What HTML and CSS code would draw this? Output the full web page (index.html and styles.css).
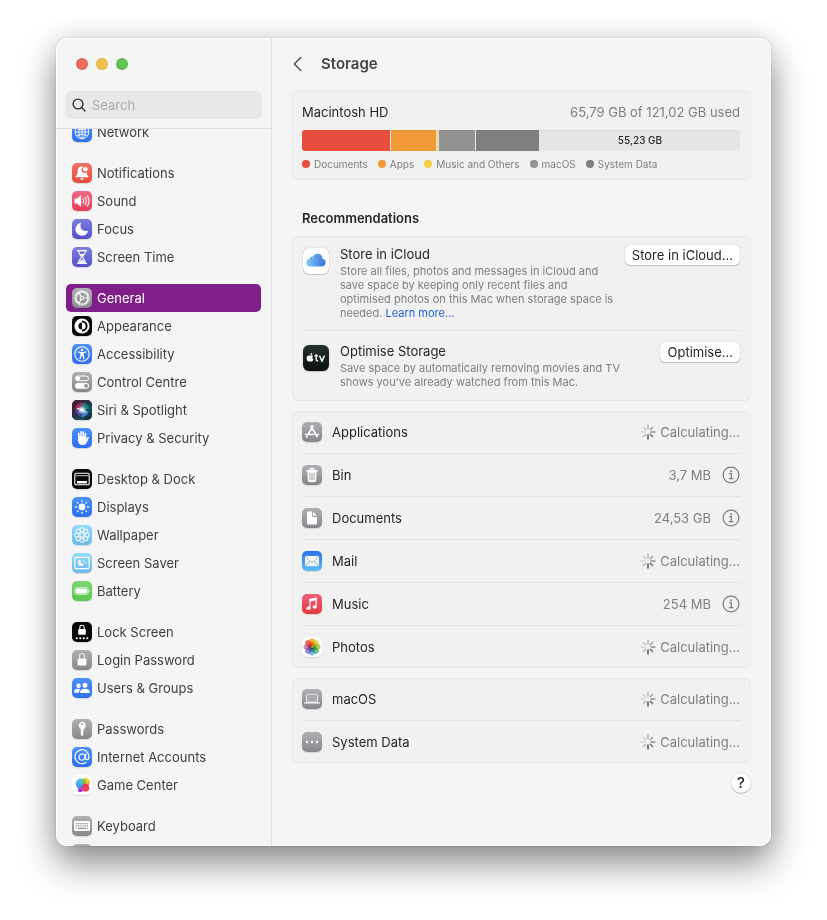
FILE: index.html
```html
<!DOCTYPE html>
<html lang="en-GB">
<head>
<meta charset="utf-8">
<meta name="viewport" content="width=device-width, initial-scale=1">
<title>Storage</title>
<link rel="stylesheet" href="styles.css">
</head>
<body>
<svg class="defs" aria-hidden="true">
  <symbol id="spinner" viewBox="0 0 16 16">
    <g stroke-width="1.700" stroke-linecap="round">
      <path d="M8 4.800V1.200" stroke="#bdbdbd"/>
      <path d="M10.400 5.600l2.100-2.100" stroke="#a8a8a8"/>
      <path d="M11.200 8h3.600" stroke="#8a8a8a"/>
      <path d="M10.400 10.400l2.100 2.100" stroke="#7a7a7a"/>
      <path d="M8 11.200v3.600" stroke="#666"/>
      <path d="M5.600 10.400l-2.100 2.100" stroke="#bdbdbd"/>
      <path d="M4.800 8H1.200" stroke="#d4d4d4"/>
      <path d="M5.600 5.600L3.500 3.500" stroke="#cfcfcf"/>
    </g>
  </symbol>
  <symbol id="info" viewBox="0 0 18 18">
    <g fill="none" stroke="#7b7b7b" stroke-width="1.200">
      <circle cx="9" cy="9" r="7.900"/>
      <path d="M7.300 7.600h2v5M6.900 12.700h4.500"/>
    </g>
    <circle cx="9" cy="5.200" r="1" fill="#7b7b7b"/>
  </symbol>
  <symbol id="lock" viewBox="0 0 20 20">
    <rect x="5.600" y="8.600" width="8.800" height="6.800" rx="1" fill="#fff"/>
    <path d="M7.500 9V6.400a2.500 2.900 0 0 1 5 0V9" fill="none" stroke="#e8e8ea" stroke-width="1.200"/>
  </symbol>
</svg>

<div class="window">
  <aside class="sidebar">
    <div class="lights">
      <button class="light close" aria-label="Close"></button>
      <button class="light minimise" aria-label="Minimise"></button>
      <button class="light expand" aria-label="Zoom"></button>
    </div>
    <label class="search">
      <svg viewBox="0 0 14 14" width="14" height="14" aria-hidden="true"><g fill="none" stroke="#333" stroke-width="1.400" stroke-linecap="round"><circle cx="6" cy="6" r="4.900"/><path d="M9.600 9.600l3.400 3.400"/></g></svg>
      <input type="search" placeholder="Search" aria-label="Search">
    </label>
    <nav class="nav" aria-label="Settings">
      <ul class="group">
        <li><a class="item" href="#"><svg class="icon blue" viewBox="0 0 20 20"><g fill="none" stroke="#fff" stroke-width=".9"><circle cx="10" cy="10" r="6.800"/><ellipse cx="10" cy="10" rx="3.200" ry="6.800"/><path d="M3.200 10h13.600M10 3.200v13.600M4.300 6.400q5.700 2.800 11.400 0M4.300 13.600q5.700-2.800 11.400 0"/></g></svg>Network</a></li>
      </ul>
      <ul class="group">
        <li><a class="item" href="#"><svg class="icon red" viewBox="0 0 20 20"><path fill="#fff" d="M9.800 3.300c-2.700.2-4 2-4.100 4.600-.1 2.800-.5 4-2 5.300-.5.600-.2 1.100.4 1.100h11.800c.6 0 .9-.5.4-1.100-1.200-1.100-1.700-2-1.900-3.900a2.900 2.900 0 0 1-3.700-4.700c.2-.5-.2-1.300-.9-1.300zM8 15.200h4q-.4 1.500-2 1.500t-2-1.500z"/><circle cx="13.400" cy="6.200" r="2.300" fill="#fff"/></svg>Notifications</a></li>
        <li><a class="item" href="#"><svg class="icon pink" viewBox="0 0 20 20"><path fill="#fff" d="M2.500 8q0-.6.600-.6h2L8.200 4.800q.9-.6.900.4v9.600q0 1-.9.400l-3.100-2.600h-2q-.6 0-.6-.6z"/><g fill="none" stroke="#fff" stroke-width="1.100" stroke-linecap="round"><path d="M11 7.800q1.300 2.200 0 4.400M13.100 6.300q2.400 3.700 0 7.400M15.300 4.900q3.500 5.100 0 10.200"/></g></svg>Sound</a></li>
        <li><a class="item" href="#"><svg class="icon indigo" viewBox="0 0 20 20"><path fill="#fff" d="M8.300 4.100c.5-.2.900.1.600.7-1.700 4.200 1.700 8.200 6.300 6.900.6-.1 1 .3.700.8A6.400 6.400 0 1 1 8.300 4.100z"/></svg>Focus</a></li>
        <li><a class="item" href="#"><svg class="icon indigo" viewBox="0 0 20 20"><path fill="none" stroke="#fff" stroke-width="1.300" stroke-linecap="round" d="M5.500 3.700h9M5.500 16.300h9"/><path fill="none" stroke="#fff" stroke-width="1.100" d="M6.600 4c0 3.500 2.700 4 2.700 6s-2.700 2.500-2.700 6M13.400 4c0 3.500-2.700 4-2.700 6s2.700 2.500 2.700 6"/><path fill="#fff" d="M7.400 7h5.200L10 10zM7 16q.5-2.500 3-3.500 2.500 1 3 3.500z"/></svg>Screen Time</a></li>
      </ul>
      <ul class="group">
        <li><a class="item selected" href="#" aria-current="page"><svg class="icon gray" viewBox="0 0 20 20"><g fill="none" stroke="#fff"><circle cx="10" cy="10" r="7.300" stroke-width="1.200" stroke-dasharray="1.100 .81"/><circle cx="10" cy="10" r="6.100" stroke-width="1.200"/><circle cx="10" cy="10" r="1.600" stroke-width="1"/><path stroke-width="1.100" d="M11.600 10h4.400M9.200 8.600L7 4.900M9.200 11.400L7 15.100"/></g></svg>General</a></li>
        <li><a class="item" href="#"><svg class="icon black" viewBox="0 0 20 20"><circle cx="10" cy="10" r="7.600" fill="#fff"/><path d="M10 4.400a5.600 5.600 0 0 1 0 11.200z" fill="#111"/><path d="M10 6.400a3.600 3.600 0 0 0 0 7.200z" fill="#111"/><path d="M10 6.400a3.600 3.600 0 0 1 0 7.200z" fill="#fff"/></svg>Appearance</a></li>
        <li><a class="item" href="#"><svg class="icon blue" viewBox="0 0 20 20"><circle cx="10" cy="10" r="7.200" fill="none" stroke="#fff" stroke-width="1.100"/><circle cx="10" cy="5.900" r="1.200" fill="#fff"/><path fill="none" stroke="#fff" stroke-width="1.200" stroke-linecap="round" stroke-linejoin="round" d="M6.200 8l2.800.6h2l2.800-.6M9.100 8.700v2.600L8 14.700M10.900 8.700v2.600l1.100 3.400"/><path fill="#fff" d="M8.800 8.500h2.400v3.200H8.800z"/></svg>Accessibility</a></li>
        <li><a class="item" href="#"><svg class="icon gray" viewBox="0 0 20 20"><rect x="3.500" y="4" width="13" height="4.800" rx="2.400" fill="none" stroke="#fff"/><circle cx="6" cy="6.400" r="2.100" fill="#fff"/><rect x="3" y="10.900" width="14" height="5.800" rx="2.900" fill="#fff"/><circle cx="14.100" cy="13.800" r="1.900" fill="#929297"/></svg>Control Centre</a></li>
        <li><a class="item" href="#"><svg class="icon black" viewBox="0 0 20 20"><defs><radialGradient id="siriCore"><stop offset="0" stop-color="#fff"/><stop offset=".3" stop-color="#cdeaff"/><stop offset="1" stop-color="#6ab8e8" stop-opacity="0"/></radialGradient><linearGradient id="siriBase" x1="0" y1="0" x2="1" y2="1"><stop offset="0" stop-color="#5a1030"/><stop offset=".45" stop-color="#23344a"/><stop offset=".7" stop-color="#145058"/><stop offset="1" stop-color="#10182a"/></linearGradient></defs><rect width="20" height="20" rx="5" fill="url(#siriBase)"/><circle cx="10" cy="10" r="7.600" fill="#222a48"/><path d="M3 9q1-6 8-6.500Q9 6 10 10z" fill="#b32a55"/><path d="M11 2.500q6 1.500 6.500 7L10 10q-1-4 1-7.500z" fill="#1a7f78"/><path d="M17 11q-1.500 6-8 6.300Q11 14 10 10z" fill="#3e81bf"/><path d="M9 17.300Q3.500 15 3 9l7 1z" fill="#5b3f8c"/><circle cx="10" cy="10" r="5" fill="url(#siriCore)"/><path d="M5 8.500q6 .5 9.500 4" stroke="#fff" stroke-width="1" fill="none"/></svg>Siri &amp; Spotlight</a></li>
        <li><a class="item" href="#"><svg class="icon blue" viewBox="0 0 20 20"><g stroke="#fff" stroke-width="1.600" stroke-linecap="round"><path d="M6.800 11V5.400M9 10V3.800M11.200 10V4M13.400 11V5.600"/></g><path fill="#fff" d="M6 8.500h8.200v2.600l1-1.600q.5-.8 1.200-.4.600.4.300 1.100l-1.800 4.100c-.8 1.800-2.100 2.700-4.200 2.700-3.100 0-4.700-1.900-4.700-4.800z"/></svg>Privacy &amp; Security</a></li>
      </ul>
      <ul class="group">
        <li><a class="item" href="#"><svg class="icon black" viewBox="0 0 20 20"><rect x="2.800" y="4.300" width="14.400" height="11.400" rx="1.300" fill="none" stroke="#fff" stroke-width="1.100"/><path d="M3.500 6.700h13" stroke="#ddd" stroke-width=".9"/><rect x="5" y="12" width="10" height="2.400" rx=".5" fill="#fff"/></svg>Desktop &amp; Dock</a></li>
        <li><a class="item" href="#"><svg class="icon blue" viewBox="0 0 20 20"><circle cx="10" cy="10" r="3.400" fill="#fff"/><path stroke="#fff" stroke-width="1.300" stroke-linecap="round" d="M10 3.600v.9M10 15.500v.9M3.600 10h.9M15.500 10h.9M5.500 5.500l.6.600M13.900 13.900l.6.600M5.500 14.500l.6-.6M13.900 6.100l.6-.6"/></svg>Displays</a></li>
        <li><a class="item" href="#"><svg class="icon sky" viewBox="0 0 20 20"><g fill="none" stroke="#fff" stroke-width="1"><circle cx="10" cy="4.800" r="2.200"/><circle cx="13.700" cy="6.300" r="2.200"/><circle cx="15.200" cy="10" r="2.200"/><circle cx="13.700" cy="13.700" r="2.200"/><circle cx="10" cy="15.200" r="2.200"/><circle cx="6.300" cy="13.700" r="2.200"/><circle cx="4.800" cy="10" r="2.200"/><circle cx="6.300" cy="6.300" r="2.200"/><circle cx="10" cy="10" r="2.200"/></g></svg>Wallpaper</a></li>
        <li><a class="item" href="#"><svg class="icon sky" viewBox="0 0 20 20"><rect x="2.900" y="4.400" width="14.200" height="11.200" rx=".8" fill="none" stroke="#fff" stroke-width="1.100"/><path fill="#fff" d="M8.400 7.200q-.4 3.100 3.100 3.600.5 0 .3.400A3.100 3.100 0 1 1 7.900 7q.5-.2.500.2z"/><circle cx="11.300" cy="8" r=".7" fill="#fff"/><circle cx="13.700" cy="9.800" r=".8" fill="#fff"/></svg>Screen Saver</a></li>
        <li><a class="item" href="#"><svg class="icon green" viewBox="0 0 20 20"><rect x="2.700" y="6.600" width="13.600" height="6.800" rx="1.900" fill="none" stroke="#d2f3cf" stroke-width=".9"/><rect x="3.700" y="7.500" width="11.600" height="5" rx="1.200" fill="#fff"/><path d="M17.200 8.800q1.300 1.200 0 2.400z" fill="#fff"/></svg>Battery</a></li>
      </ul>
      <ul class="group">
        <li><a class="item" href="#"><svg class="icon black" viewBox="0 0 20 20"><rect x="6.200" y="7" width="7.600" height="5.800" rx=".9" fill="#fff"/><path d="M7.800 7.500V5.700a2.200 2.400 0 0 1 4.400 0v1.800" fill="none" stroke="#fff" stroke-width="1.100"/><path d="M4.700 16.200h.1M8.200 16.200h.1M11.700 16.200h.1M15.200 16.200h.1" stroke="#fff" stroke-width="2" stroke-linecap="round"/></svg>Lock Screen</a></li>
        <li><a class="item" href="#"><svg class="icon gray" viewBox="0 0 20 20"><use href="#lock"/></svg>Login Password</a></li>
        <li><a class="item" href="#"><svg class="icon blue" viewBox="0 0 20 20"><g fill="#fff"><circle cx="6.600" cy="7.700" r="2.200"/><circle cx="13" cy="7.300" r="2.500"/><path d="M2 14q.2-3.200 4.300-3.200 1 0 2 .4Q7 12.400 7 14.800H2.800Q2 14.800 2 14zM8 14.200q.3-3.500 5-3.500t5 3.500q0 .8-.8.800H8.800q-.8 0-.8-.8z"/></g></svg>Users &amp; Groups</a></li>
      </ul>
      <ul class="group">
        <li><a class="item" href="#"><svg class="icon gray" viewBox="0 0 20 20"><path fill="#fff" fill-rule="evenodd" d="M10 2.800a3.900 3.900 0 0 1 1.700 7.300v1.100l-.9.900 1.100 1-1.100 1.100.9 1-1.700 2-1.200-1.200v-5.900A3.900 3.900 0 0 1 10 2.800zM10 4a1.100 1.100 0 1 0 0 2.200A1.100 1.100 0 0 0 10 4z"/></svg>Passwords</a></li>
        <li><a class="item" href="#"><svg class="icon blue" viewBox="0 0 20 20"><g fill="none" stroke="#fff" stroke-width="1.200" stroke-linecap="round"><path d="M14.200 15.300A7 7 0 1 1 17 9.700c0 3.900-3.900 3.700-3.500.7l.5-3.500"/><ellipse cx="10" cy="10" rx="2.900" ry="3.200" transform="rotate(20 10 10)"/></g></svg>Internet Accounts</a></li>
        <li><a class="item" href="#"><svg class="icon white" viewBox="0 0 20 20"><defs><linearGradient id="gcBlue" x1="0" y1="0" x2="0" y2="1"><stop offset="0" stop-color="#55cdf4"/><stop offset="1" stop-color="#3b8cf0"/></linearGradient><linearGradient id="gcYellow" x1="0" y1="0" x2="0" y2="1"><stop offset="0" stop-color="#fbe23d"/><stop offset="1" stop-color="#f39422"/></linearGradient></defs><circle cx="8.200" cy="15" r="2.300" fill="#a12bf0"/><circle cx="13.700" cy="7" r="4.300" fill="url(#gcYellow)"/><circle cx="8.700" cy="8.600" r="5" fill="url(#gcBlue)"/><path d="M9.600 8.400a4.300 4.300 0 0 1 2-5 5 5 0 0 1 1.900 6.200q-1.600.9-3.900-1.200z" fill="#6cc04e"/><circle cx="13.400" cy="12.700" r="3.900" fill="#f7395f"/><path d="M9.700 11.600a3.900 3.900 0 0 1 3.500-2.700q-.9 3.600-3.700 4.500z" fill="#a2507e"/></svg>Game Center</a></li>
      </ul>
      <ul class="group">
        <li><a class="item" href="#"><svg class="icon gray" viewBox="0 0 20 20"><rect x="2" y="5" width="16" height="10" rx="1.400" fill="#fff"/><path d="M3.800 7.600h12.400M3.800 9.900h12.400" stroke="#8f8f94" stroke-width="1.200" stroke-dasharray="1.200 .65"/><path d="M3.800 12.400h1.200M6 12.400h8M15 12.400h1.200" stroke="#8f8f94" stroke-width="1.200"/></svg>Keyboard</a></li>
        <li><a class="item" href="#" aria-label="Mouse"><svg class="icon gray" viewBox="0 0 20 20"><rect x="6.500" y="4" width="7" height="12" rx="3.500" fill="#fff"/></svg></a></li>
      </ul>
    </nav>
  </aside>

  <main class="content">
    <header class="titlebar">
      <button class="back" aria-label="Back"><svg viewBox="0 0 10 16" width="10" height="16"><path d="M8.800 1.500L2.300 8l6.500 6.500" fill="none" stroke="#555" stroke-width="1.500" stroke-linecap="round" stroke-linejoin="round"/></svg></button>
      <h1>Storage</h1>
    </header>

    <section class="card disk">
      <div class="disk-head"><h2>Macintosh HD</h2><span>65,79 GB of 121,02 GB used</span></div>
      <div class="bar">
        <span class="seg documents" style="flex-grow:88"></span>
        <span class="seg apps" style="flex-grow:45"></span>
        <span class="seg music" style="flex-grow:1"></span>
        <span class="seg macos" style="flex-grow:36"></span>
        <span class="seg system" style="flex-grow:63"></span>
        <span class="seg free" style="flex-grow:200">55,23 GB</span>
      </div>
      <ul class="legend">
        <li><i class="documents"></i>Documents</li>
        <li><i class="apps"></i>Apps</li>
        <li><i class="music"></i>Music and Others</li>
        <li><i class="macos"></i>macOS</li>
        <li><i class="system"></i>System Data</li>
      </ul>
    </section>

    <h2 class="section-title">Recommendations</h2>
    <section class="card">
      <article class="tip">
        <svg class="app-icon white" viewBox="0 0 26 26"><defs><linearGradient id="cloud"><stop offset="0" stop-color="#7fcdf3"/><stop offset="1" stop-color="#3a71e0"/></linearGradient></defs><path fill="url(#cloud)" d="M7 18.600a3.900 3.900 0 0 1-.8-7.700 3.200 3.200 0 0 1 3.700-2.400 5 5 0 0 1 9.500 2.200 4 4 0 0 1-.5 7.900z"/></svg>
        <div class="tip-text">
          <h3>Store in iCloud</h3>
          <p>Store all files, photos and messages in iCloud and save space by keeping only recent files and optimised photos on this Mac when storage space is needed. <a href="#">Learn more…</a></p>
        </div>
        <button class="push">Store in iCloud…</button>
      </article>
      <article class="tip">
        <svg class="app-icon tv" viewBox="0 0 26 26"><path fill="#fff" d="M7.500 10.700c.8-.5 1.900-.5 2.700.2-1.300.9-1.100 2.800.3 3.400-.4 1.200-1.100 2.300-1.900 2.300-.6 0-.8-.3-1.400-.3s-.9.300-1.400.3C4.700 16.600 3.600 14.800 3.600 13c0-2.100 1.700-3.100 3-2.400zM7.400 10.100c-.1-1.200.8-2.200 1.900-2.400.1 1.300-.8 2.300-1.900 2.400z"/><path fill="none" stroke="#fff" stroke-width="1.400" d="M13.200 8.900v5.700q0 1.500 2 1.200M11.500 10.900h3.700M16.500 10.600l2.500 5.500 2.500-5.500"/></svg>
        <div class="tip-text">
          <h3>Optimise Storage</h3>
          <p>Save space by automatically removing movies and TV shows you’ve already watched from this Mac.</p>
        </div>
        <button class="push">Optimise…</button>
      </article>
    </section>

    <ul class="card rows">
      <li><svg class="icon gray" viewBox="0 0 20 20"><path fill="none" stroke="#fff" stroke-width="1.600" stroke-linecap="round" d="M9 4l5.900 10.600M11 4L6 12.500M3.500 12.500h8M14 12.500h2.500M5 14.300l-.4.700"/></svg><span class="name">Applications</span><span class="value"><svg class="spin"><use href="#spinner"/></svg>Calculating…</span></li>
      <li><svg class="icon gray" viewBox="0 0 20 20"><path fill="none" stroke="#fff" stroke-width="1.200" stroke-linecap="round" stroke-linejoin="round" d="M4.400 5.700h11.200M8 5.500V3.700h4v1.800"/><path fill="#fff" d="M5.300 6h9.400l-.6 9.700q-.1 1.200-1.200 1.200H7.100q-1.100 0-1.200-1.200z"/><path stroke="#98989c" stroke-width=".9" d="M7.800 7.800l.3 7.200M10 7.800V15M12.200 7.800l-.3 7.200"/></svg><span class="name">Bin</span><span class="value">3,7 MB<button class="info" aria-label="Info for Bin"><svg><use href="#info"/></svg></button></span></li>
      <li><svg class="icon gray" viewBox="0 0 20 20"><path fill="#fff" d="M6.300 3.500h3.800v4.300q0 1.100 1.100 1.100H15v6.300q0 1.300-1.300 1.300H6.300Q5 16.500 5 15.200V4.800q0-1.300 1.300-1.300z"/><path fill="#fff" d="M11.100 3.700L14.800 7.700h-3q-.7 0-.7-.7z"/></svg><span class="name">Documents</span><span class="value">24,53 GB<button class="info" aria-label="Info for Documents"><svg><use href="#info"/></svg></button></span></li>
      <li><svg class="icon mail" viewBox="0 0 20 20"><rect x="3" y="5" width="14" height="10.300" rx="1.200" fill="#f2f4f6"/><path d="M3.500 5.700l5.600 5.300q.9.700 1.800 0l5.600-5.300M3.500 14.700l4.300-4.400M16.500 14.700l-4.300-4.400" stroke="#a0a7b2" stroke-width=".8" fill="none"/></svg><span class="name">Mail</span><span class="value"><svg class="spin"><use href="#spinner"/></svg>Calculating…</span></li>
      <li><svg class="icon music-app" viewBox="0 0 20 20"><path fill="none" stroke="#fff" stroke-width="1.200" d="M8 13.800V5.600l6.100-1.300v8.200"/><path fill="#fff" d="M7.500 5.200l7.200-1.600v2.500L7.500 7.700z"/><ellipse cx="6.500" cy="14.200" rx="2.100" ry="1.700" fill="#fff"/><ellipse cx="12.700" cy="12.900" rx="2.100" ry="1.700" fill="#fff"/></svg><span class="name">Music</span><span class="value">254 MB<button class="info" aria-label="Info for Music"><svg><use href="#info"/></svg></button></span></li>
      <li><svg class="icon white" viewBox="0 0 20 20"><g class="petals"><rect x="7.300" y="1.500" width="5.400" height="8" rx="2.700" fill="#f6a42c"/><rect x="7.300" y="1.500" width="5.400" height="8" rx="2.700" fill="#e3d839" transform="rotate(45 10 10)"/><rect x="7.300" y="1.500" width="5.400" height="8" rx="2.700" fill="#a6ce56" transform="rotate(90 10 10)"/><rect x="7.300" y="1.500" width="5.400" height="8" rx="2.700" fill="#63bb88" transform="rotate(135 10 10)"/><rect x="7.300" y="1.500" width="5.400" height="8" rx="2.700" fill="#6caee2" transform="rotate(180 10 10)"/><rect x="7.300" y="1.500" width="5.400" height="8" rx="2.700" fill="#9084cc" transform="rotate(225 10 10)"/><rect x="7.300" y="1.500" width="5.400" height="8" rx="2.700" fill="#cc87b6" transform="rotate(270 10 10)"/><rect x="7.300" y="1.500" width="5.400" height="8" rx="2.700" fill="#ef5d4a" transform="rotate(315 10 10)"/></g></svg><span class="name">Photos</span><span class="value"><svg class="spin"><use href="#spinner"/></svg>Calculating…</span></li>
    </ul>

    <ul class="card rows">
      <li><svg class="icon gray" viewBox="0 0 20 20"><rect x="4.500" y="5.400" width="11" height="7.700" rx=".6" fill="#aaaaae" stroke="#e6e6e8"/><path d="M2.300 13.900h15.400" stroke="#fff" stroke-width="1.200"/></svg><span class="name">macOS</span><span class="value"><svg class="spin"><use href="#spinner"/></svg>Calculating…</span></li>
      <li><svg class="icon gray" viewBox="0 0 20 20"><g fill="#fff"><circle cx="5" cy="10" r="1.200"/><circle cx="10" cy="10" r="1.200"/><circle cx="15" cy="10" r="1.200"/></g></svg><span class="name">System Data</span><span class="value"><svg class="spin"><use href="#spinner"/></svg>Calculating…</span></li>
    </ul>
    <button class="help" aria-label="Help">?</button>
  </main>
</div>
</body>
</html>
```
FILE: styles.css
```css
* { box-sizing: border-box; }
body {
  margin: 0;
  height: 100vh;
  padding: 38px 56px 74px;
  display: flex;
  background: #fff;
  font: 13px/16px Inter, "Liberation Sans", sans-serif;
  color: #262626;
}
h1, h2, h3, p, ul { margin: 0; padding: 0; font-size: inherit; font-weight: 400; }
ul { list-style: none; }
button { font: inherit; color: inherit; border: 0; padding: 0; background: none; }
a { color: inherit; text-decoration: none; }
.defs { position: absolute; width: 0; height: 0; }

.window {
  flex: 1;
  display: flex;
  min-width: 0;
  overflow: hidden;
  border-radius: 11px;
  background: #f5f5f5;
  box-shadow: 0 0 1px rgba(0,0,0,.5), inset 0 0 0 1px #fff, 0 18px 36px rgba(0,0,0,.44), 0 0 24px rgba(0,0,0,.1);
}

.sidebar {
  flex: 0 0 216px;
  min-width: 0;
  display: flex;
  flex-direction: column;
  border-right: 1px solid #e0e0e0;
}
.lights { display: flex; gap: 8px; padding: 20px 20px 21px; }
.light { width: 12px; height: 12px; border-radius: 50%; box-shadow: inset 0 0 0 1px rgba(0,0,0,.06); }
.close { background: #ed6a5f; }
.minimise { background: #f5bf4f; }
.expand { background: #61c554; }
.search {
  display: flex;
  align-items: center;
  gap: 6px;
  height: 28px;
  margin: 0 9px 9px;
  padding: 0 7px;
  border-radius: 6px;
  background: #e8e8e8;
}
.search svg { flex: none; }
.search input {
  flex: 1;
  width: 100%;
  min-width: 0;
  border: 0;
  padding: 0;
  outline: 0;
  background: none;
  font: inherit;
  appearance: none;
}
.search input::placeholder { color: #ababab; }
.nav { flex: 1; min-height: 0; overflow: hidden; border-top: 1px solid #dcdcdc; padding: 0 10px; }
.group { margin-bottom: 13px; }
.group:first-child { margin-top: -11px; }
.item {
  display: flex;
  align-items: center;
  gap: 5px;
  height: 28px;
  padding: 0 6px;
  border-radius: 5px;
  color: #3f3f3f;
}
.selected { background: #811f8a; color: #fff; }

.icon { flex: none; width: 20px; height: 20px; border-radius: 5px; box-shadow: 0 1px 1px rgba(0,0,0,.12); }
.blue { background: linear-gradient(#4c92f8, #2d6ff0); }
.red { background: linear-gradient(#ef7569, #e9493a); }
.pink { background: linear-gradient(#ef6a86, #ea3d5b); }
.indigo { background: linear-gradient(#7f7ce0, #5350cb); }
.gray { background: linear-gradient(#b0b0b4, #88888c); }
.black { background: #080808; }
.sky { background: linear-gradient(#92dcf8, #6db9e8); }
.green { background: linear-gradient(#7bd974, #5bc552); }
.white { background: #fff; }
.mail { background: linear-gradient(#2f6ce8, #59c3f8); }
.music-app { background: linear-gradient(#ee6277, #e6373f); }
.petals rect { mix-blend-mode: multiply; opacity: .92; }

.content { flex: 1; min-width: 0; padding: 0 20px; }
.titlebar { display: flex; align-items: center; gap: 19px; height: 52px; }
.titlebar h1 { font-size: 15px; line-height: 20px; font-weight: 600; color: #444; }
.back { display: flex; }
.card {
  border-radius: 6px;
  background: #f1f1f1;
  box-shadow: inset 0 0 0 1px #e8e8e8;
}
.disk { padding: 14px 11px 8px 10px; }
.disk-head { display: flex; justify-content: space-between; margin-bottom: 10px; }
.disk-head span { color: #7f7f7f; }
.bar {
  display: flex;
  gap: 1px;
  height: 21px;
  overflow: hidden;
  border-radius: 3px;
  background: #e6e6e6;
}
.seg { flex: 0 0 0; min-width: 1px; }
.seg, .legend i { box-shadow: inset 0 1px 0 rgba(0,0,0,.05); }
.documents { background: #e94d3d; }
.apps { background: #f19b38; }
.music { background: #f8ce46; }
.macos { background: #929292; }
.system { background: #7f7f7f; }
.free { font-size: 10px; line-height: 21px; font-weight: 500; text-align: center; white-space: nowrap; }
.legend {
  display: flex;
  gap: 10px;
  padding-top: 5px;
  font-size: 10px;
  line-height: 16px;
  color: #7f7f7f;
  white-space: nowrap;
}
.legend li { display: flex; align-items: center; gap: 4px; }
.legend i { width: 8px; height: 8px; border-radius: 50%; }
.section-title { margin: 30px 10px 10px; font-weight: 600; }

.tip { display: flex; align-items: flex-start; margin: 0 10px; padding: 10px 0; }
.tip + .tip { border-top: 1px solid #e3e3e3; padding: 12px 0; }
.app-icon {
  flex: none;
  width: 26px;
  height: 26px;
  margin: 2px 11px 0 1px;
  border-radius: 6px;
  box-shadow: 0 0 1px rgba(0,0,0,.4), 0 1px 1px rgba(0,0,0,.15);
}
.tv { background: linear-gradient(#25302f, #0c1010); }
.tip-text { flex: 1; min-width: 0; }
.tip-text p { max-width: 281px; margin-top: 2px; font-size: 11px; line-height: 14px; color: #7f7f7f; }
.tip-text a { color: #1f5fd6; }
.push {
  flex: none;
  height: 20px;
  margin: -1px 1px 0 0;
  padding: 0 7px;
  border-radius: 5px;
  background: #fff;
  line-height: 20px;
  box-shadow: 0 0 1px rgba(0,0,0,.3), 0 1px 1px rgba(0,0,0,.2);
}

.rows { margin-top: 10px; padding: 0 10px; }
.rows li { display: flex; align-items: center; gap: 10px; height: 43px; border-bottom: 1px solid #e3e3e3; }
.rows li:last-child { height: 42px; border-bottom: 0; }
.name { flex: 1; }
.value { display: flex; align-items: center; margin-right: 1px; color: #7f7f7f; }
.spin { width: 16px; height: 16px; margin-right: 4px; }
.info { display: flex; margin-left: 11px; }
.info svg { width: 18px; height: 18px; }
.help {
  display: block;
  width: 20px;
  height: 20px;
  margin: 10px 0 0 auto;
  border-radius: 50%;
  background: #fff;
  font-size: 15px;
  line-height: 20px;
  font-weight: 500;
  box-shadow: 0 0 1px rgba(0,0,0,.3), 0 1px 1px rgba(0,0,0,.2);
}
```
